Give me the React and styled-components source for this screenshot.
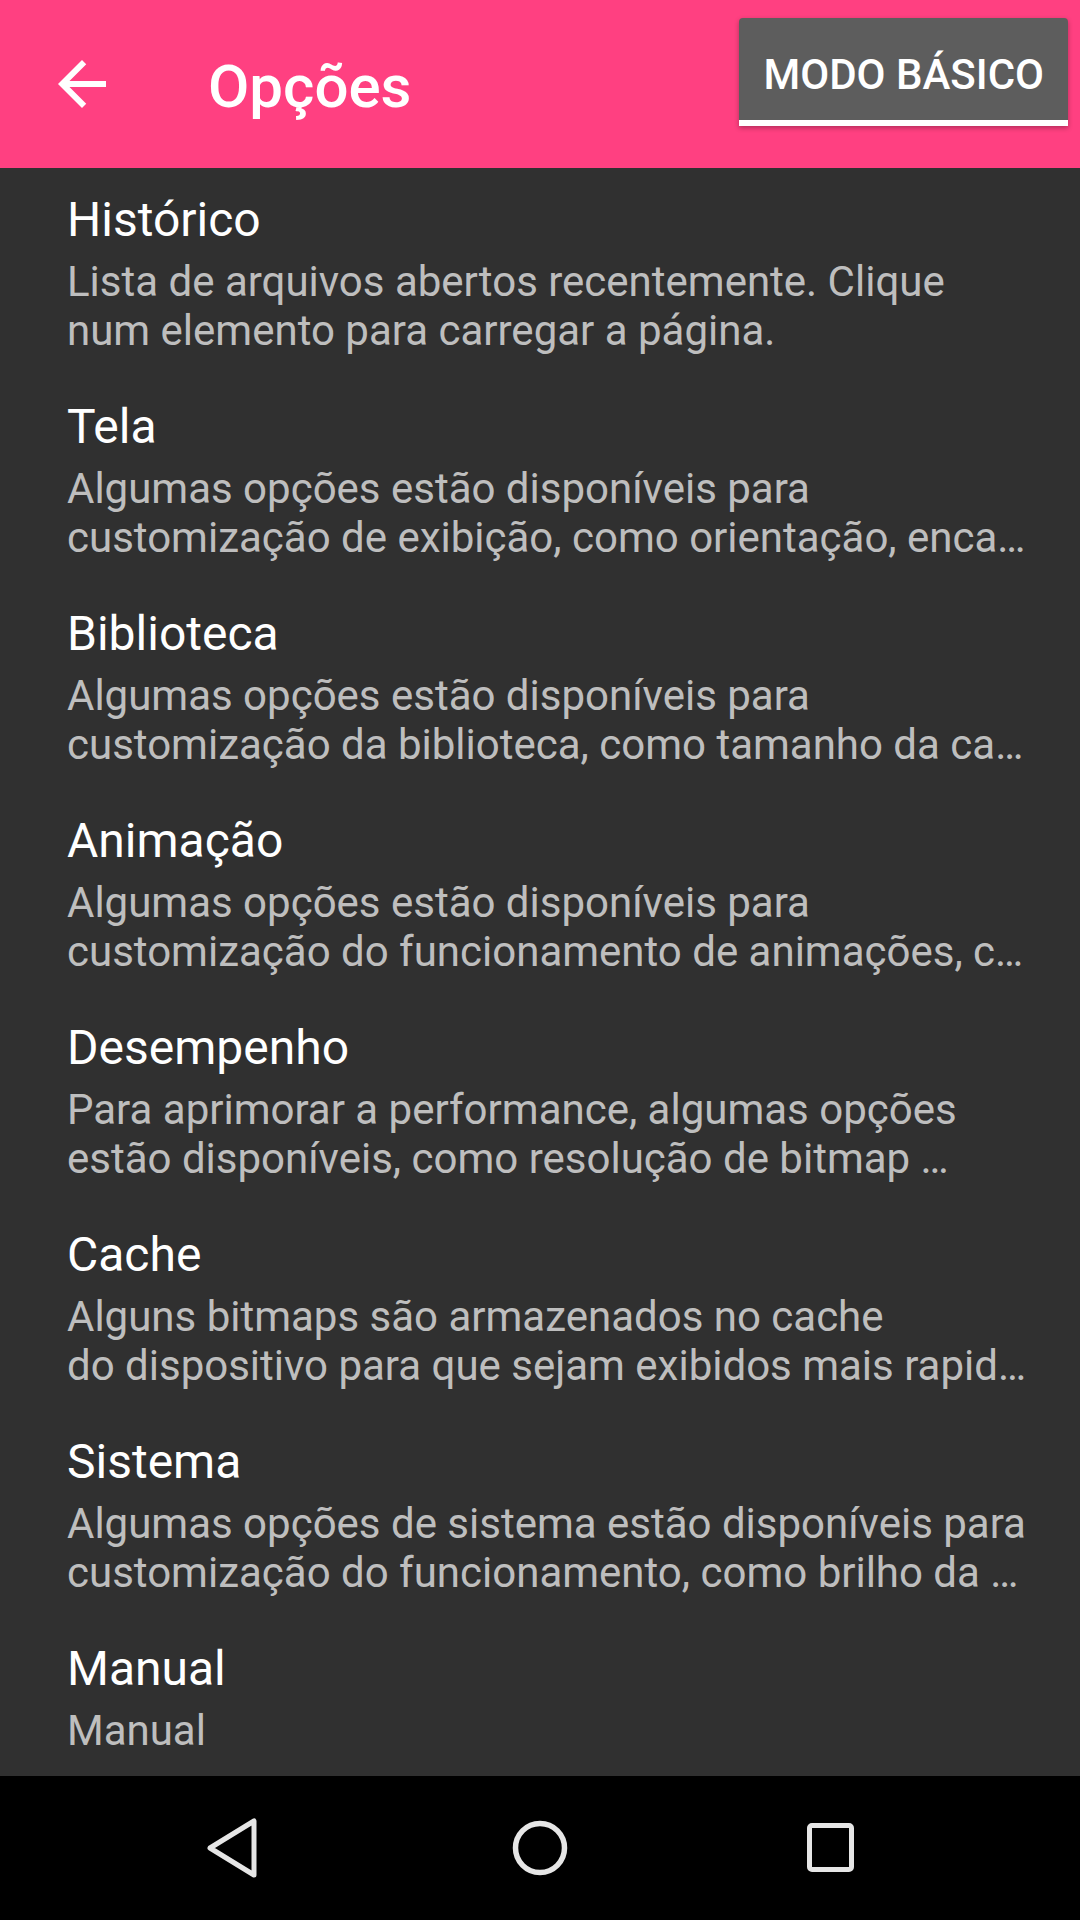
import React from 'react';
import styled, { createGlobalStyle } from 'styled-components';

const GlobalStyle = createGlobalStyle`
    html, body {
        margin: 0;
        padding: 0;
        background: #303030;
    }
    * {
        box-sizing: border-box;
    }
`;

const Screen = styled.div`
    display: flex;
    flex-direction: column;
    width: 1080px;
    height: 1920px;
    overflow: hidden;
    background: #303030;
    font-family: Roboto, "Noto Sans", sans-serif;
`;

const Toolbar = styled.div`
    display: flex;
    align-items: center;
    flex-shrink: 0;
    height: 168px;
    padding-left: 46px;
    background: #ff4081;
    position: relative;
    z-index: 1;
`;

const BackButton = styled.div`
    display: flex;
    width: 72px;
    height: 72px;
`;

const Title = styled.h1`
    margin: 5px 0 0 90px;
    color: #ffffff;
    font-size: 60px;
    font-weight: 500;
    line-height: normal;
`;

const ModeButton = styled.div`
    display: flex;
    align-items: center;
    align-self: flex-start;
    height: 108px;
    margin: 18px 12px 0 auto;
    padding: 11px 24px 0 24px;
    background: #5d5d5d;
    border-bottom: 6px solid #ffffff;
    border-radius: 4px 4px 0 0;
    box-shadow: 0px 2px 5px rgba(0, 0, 0, 0.3);
    color: #ffffff;
    font-size: 42px;
    font-weight: 500;
    line-height: 49px;
    text-transform: uppercase;
    white-space: nowrap;
`;

const List = styled.div`
    flex: 1;
    overflow: hidden;
`;

const Item = styled.div`
    padding: 24px 48px 20px 67px;
`;

const ItemTitle = styled.div`
    color: #ffffff;
    font-size: 48px;
    line-height: 56px;
`;

const ItemSummary = styled.div`
    margin-top: 9px;
    color: rgba(255, 255, 255, 0.7);
    font-size: 42px;
    line-height: 49px;
    display: -webkit-box;
    -webkit-box-orient: vertical;
    -webkit-line-clamp: 2;
    overflow: hidden;
`;

const NavBar = styled.div`
    display: flex;
    align-items: center;
    flex-shrink: 0;
    height: 144px;
    padding-left: 204px;
    background: #000000;
`;

const NavIcon = styled.svg`
    display: block;
    flex-shrink: 0;
    margin-left: ${props => props.offset || 0}px;
`;

const items = [
    { title: 'Histórico', summary: 'Lista de arquivos abertos recentemente. Clique num elemento para carregar a página.' },
    { title: 'Tela', summary: 'Algumas opções estão disponíveis para customização de exibição, como orientação, enca…' },
    { title: 'Biblioteca', summary: 'Algumas opções estão disponíveis para customização da biblioteca, como tamanho da ca…' },
    { title: 'Animação', summary: 'Algumas opções estão disponíveis para customização do funcionamento de animações, c…' },
    { title: 'Desempenho', summary: 'Para aprimorar a performance, algumas opções estão disponíveis, como resolução de bitmap …' },
    { title: 'Cache', summary: 'Alguns bitmaps são armazenados no cache do\u00a0dispositivo para que sejam exibidos mais rapid…' },
    { title: 'Sistema', summary: 'Algumas opções de sistema estão disponíveis para customização do funcionamento, como brilho da …' },
    { title: 'Manual', summary: 'Manual' },
];

function App() {
    return (
        <Screen>
            <GlobalStyle />
            {/* action bar */}
            <Toolbar>
                <BackButton>
                    <svg width="72" height="72" viewBox="0 0 24 24">
                        <path fill="#ffffff" d="M20 11H7.83l5.59-5.59L12 4l-8 8 8 8 1.41-1.41L7.83 13H20v-2z" />
                    </svg>
                </BackButton>
                <Title>Opções</Title>
                <ModeButton>Modo básico</ModeButton>
            </Toolbar>

            <List>
                {items.map(item => (
                    <Item key={item.title}>
                        <ItemTitle>{item.title}</ItemTitle>
                        <ItemSummary>{item.summary}</ItemSummary>
                    </Item>
                ))}
            </List>

            {/* system navigation */}
            <NavBar>
                <NavIcon width="56" height="64" viewBox="0 0 56 64">
                    <path d="M6 32 L50 5 L50 59 Z" fill="none" stroke="#e6e6e6" strokeWidth="5" strokeLinejoin="round" />
                </NavIcon>
                <NavIcon width="64" height="64" viewBox="0 0 64 64" offset={248}>
                    <circle cx="32" cy="32" r="24.5" fill="none" stroke="#e6e6e6" strokeWidth="5.5" />
                </NavIcon>
                <NavIcon width="56" height="56" viewBox="0 0 56 56" offset={232}>
                    <rect x="5.5" y="5.5" width="42" height="44" rx="2.5" fill="none" stroke="#e6e6e6" strokeWidth="5" />
                </NavIcon>
            </NavBar>
        </Screen>
    );
}

export default App;
